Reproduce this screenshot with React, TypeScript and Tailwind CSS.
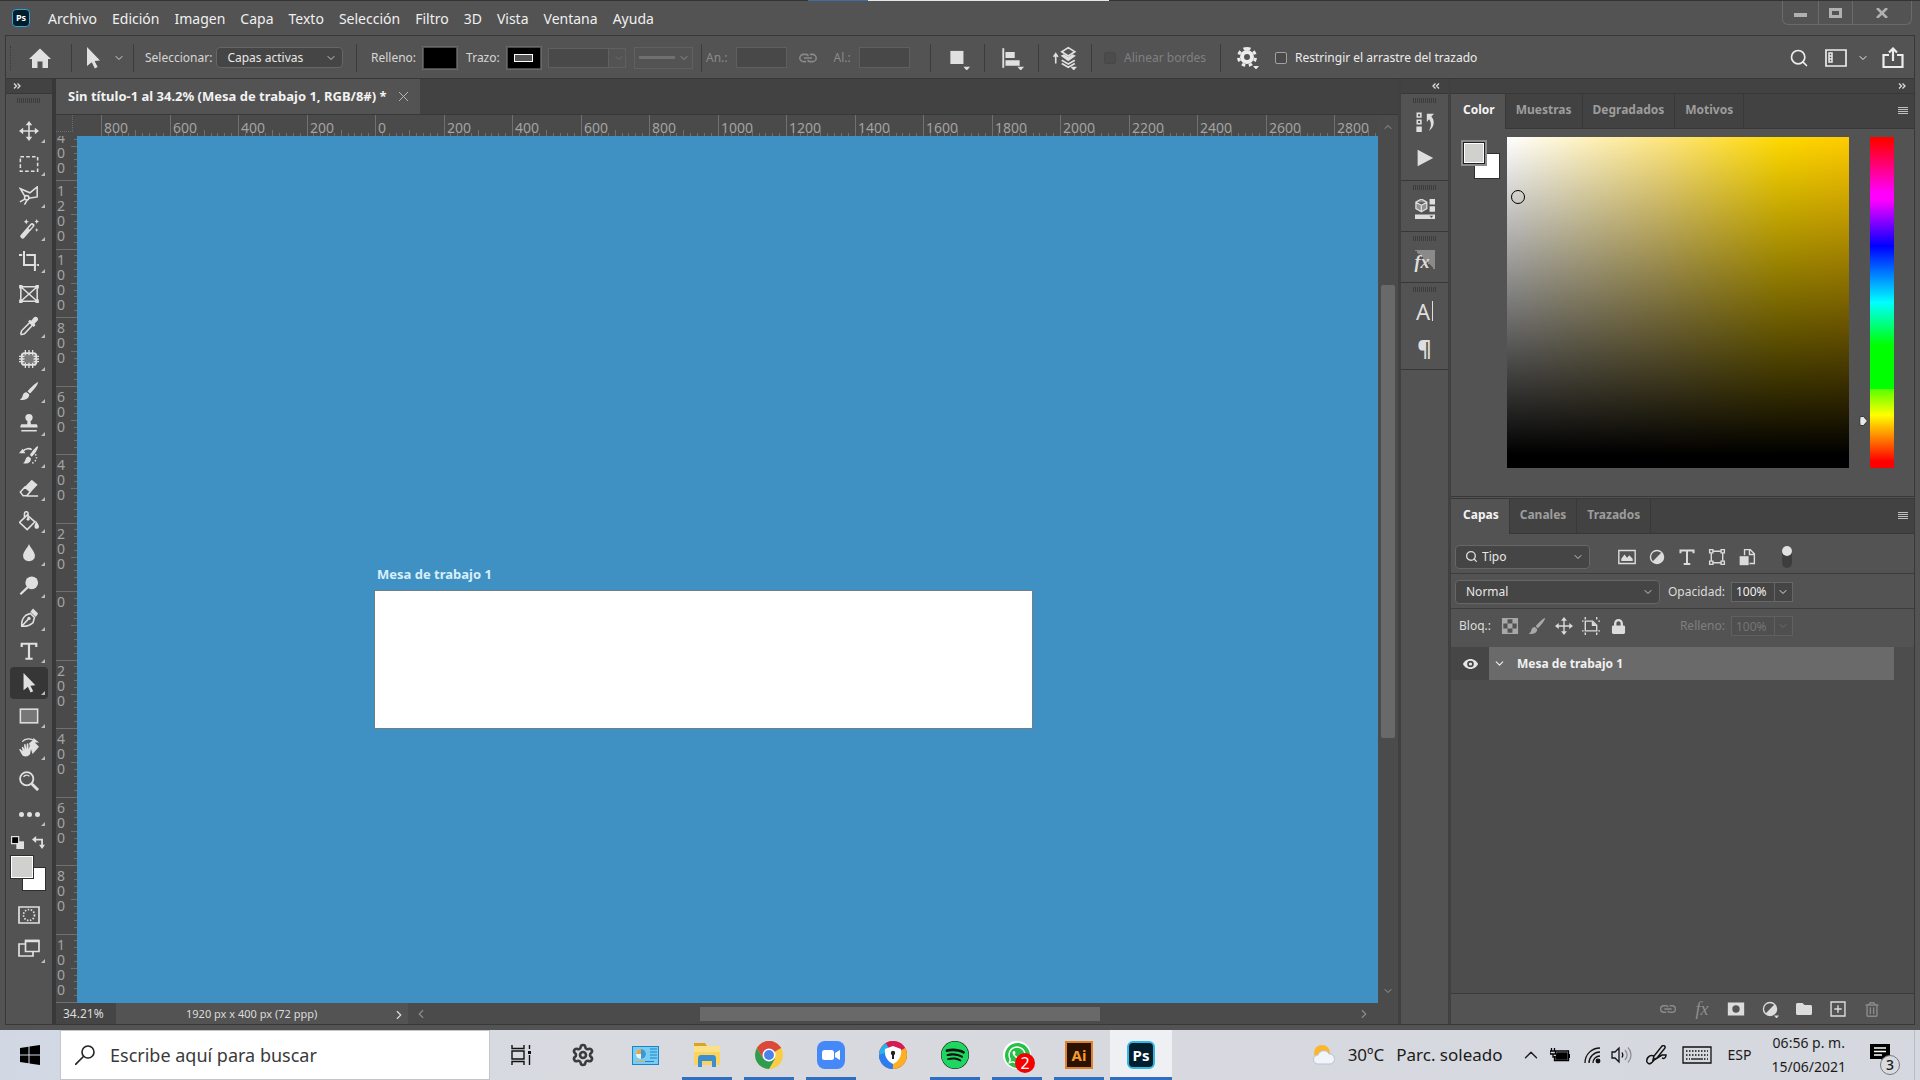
import clsx from "clsx";
import { ChevronDown, ChevronLeft, ChevronRight, ChevronUp, Search, Settings } from "lucide-react";
import React from "react";
import { FaFolder, FaLock, FaRegTrashAlt, FaSpotify, FaWhatsapp } from "react-icons/fa";

interface IconProps {
    size?: number;
    className?: string;
    children: React.ReactNode;
}

const Icon: React.FC<IconProps> = ({ size = 22, className, children }) => (
    <svg width={size} height={size} viewBox="0 0 22 22" fill="none" stroke="currentColor" strokeWidth={1.7} className={clsx("shrink-0", className)} aria-hidden="true">
        {children}
    </svg>
);

const solid = { fill: "currentColor", stroke: "none" };

/* Shared glyphs */
const MoveGlyph = () => (
    <>
        <path d="M11 4v14M4 11h14" />
        <path {...solid} d="M11 0l3.6 4.6H7.4zM11 22l3.6-4.6H7.4zM0 11l4.6-3.6v7.2zM22 11l-4.6-3.6v7.2z" />
    </>
);

const ArrowGlyph = () => <path {...solid} d="M5 0l13 13.5-5.4.4 3 6.2-2.8 1.4-3-6.3L5 19z" />;

const BrushGlyph = () => (
    <path {...solid} d="M21 1c-3 1.200-8.500 6.500-11.600 10.300l2.600 2.500C15.500 10.500 20.500 5 21 1zM8.300 12.300c-2.500 0-3.800 1.700-4.200 3.700C3.700 18 2.600 19.500 1 20.500c3.500.9 8.600.3 10-3.600.4-1.200.2-2-.1-2.500z" />
);

const LinkGlyph = () => (
    <path d="M9 15H6a4 4 0 010-8h3M13 7h3a4 4 0 010 8h-3M6.500 11h9M9 7c1.500 0 2 .8 2 2M13 15c-1.500 0-2-.8-2-2" />
);

const TextGlyph = () => <path strokeWidth={2.4} d="M3 6.500V3h16v3.500M11 3v16.500M7 19.500h8" />;

const HalfCircle = () => (
    <>
        <circle cx="11" cy="11" r="8" />
        <path {...solid} d="M16.700 5.300A8 8 0 015.300 16.700z" />
    </>
);

interface Tool {
    name: string;
    glyph: React.ReactNode;
    corner?: boolean;
    active?: boolean;
}

const tools: Tool[] = [
    { name: "Mover", corner: true, glyph: <MoveGlyph /> },
    { name: "Marco rectangular", corner: true, glyph: <path strokeDasharray="4 2.400" d="M1.500 3h19v16h-19z" /> },
    {
        name: "Lazo poligonal", corner: true,
        glyph: <><path d="M10.500 13.500l9.500-1.500V1l-8 6.500L1.500 3l5 8.500" /><circle cx="8.500" cy="13" r="2.400" /><path d="M6.500 14.500L1 17.500M9 15.500l-3 5" /></>,
    },
    {
        name: "Varita mágica", corner: true,
        glyph: <><path strokeLinecap="round" strokeWidth={5} d="M4 19L14.500 7" /><path stroke="#535353" strokeWidth={1.800} d="M11 11l3.700-4.200" /><path {...solid} d="M8 0l.9 2.100L11 3l-2.100.9L8 6l-.9-2.100L5 3l2.100-.9zM19.500 0l.8 2 1.700.8-1.700.8-.8 2-.8-2-1.700-.8 1.700-.8zM19.500 10l.6 1.500 1.400.6-1.400.6-.6 1.500-.6-1.500-1.400-.6 1.400-.6z" /></>,
    },
    { name: "Recortar", corner: true, glyph: <path strokeWidth={2.200} d="M5.500 0v15.500H19M0 4.500h3.500M8 4.500h9.500V22M20 15.500h2.500" /> },
    { name: "Marco", glyph: <path d="M2 3h18v16H2zM2 3l18 16M20 3L2 19M1 2h2v2H1zM19 2h2v2h-2zM1 18h2v2H1zM19 18h2v2h-2z" /> },
    {
        name: "Cuentagotas", corner: true,
        glyph: <><path d="M12 7l3 3-9 9.500-3.500 1L2 19l1-3z" /><path {...solid} d="M10 6l2-2 1.500 1.200L16.500 1.500c2.500-2.300 6 1.200 3.800 3.800L17 8.500l1.200 1.500-2 2z" /></>,
    },
    {
        name: "Parche", corner: true,
        glyph: <><rect x="3" y="4.500" width="16" height="13" rx="3" fill="#7a7a7a" strokeWidth={2} /><path strokeWidth={1.400} d="M7 1v6M11 1v6M15 1v6M7 15v6M11 15v6M15 15v6M0 8h6M0 11h6M0 14h6M16 8h6M16 11h6M16 14h6" /></>,
    },
    { name: "Pincel", corner: true, glyph: <BrushGlyph /> },
    {
        name: "Tampón de clonar", corner: true,
        glyph: <><circle {...solid} cx="11" cy="5" r="4" /><path {...solid} d="M9.500 7h3l.6 5.500H19c1 0 1.500 1.500 1.500 3.500h-19c0-2 .5-3.500 1.500-3.500h6z" /><path d="M2.500 19.500h17" /></>,
    },
    {
        name: "Pincel de historia", corner: true,
        glyph: <><path {...solid} d="M21 0c-3 1.200-6.500 6-9 9.800l2 2C17 9 21 4 21 0zM10.500 11.500c-3 .5-3 3-4 5-.5 1-1 1.700-2 2.500 3 .9 7.500.3 8.500-3.600.2-1 .1-1.600-.1-2zM0 8l4-5 3 5z" /><path d="M4 6c3-4 8-3.500 10-2" /><path strokeDasharray="1.500 2" d="M18 9c3 4 0 9-4 10" /></>,
    },
    { name: "Borrador", corner: true, glyph: <><path d="M1.500 15.500l5-5.500 6 5-4 4.500H4.500zM8 19.800h13" /><path {...solid} d="M6.500 9.500L14 2l6.500 5.500-7.500 8z" /></> },
    {
        name: "Bote de pintura", corner: true,
        glyph: <><path d="M9 4.500L17.500 12 9 20.500.5 12.500zM6 7V3c0-3 4-3 4 0v6" /><circle {...solid} cx="10" cy="9" r="1.600" /><path {...solid} d="M18.500 10.500c1.500 2.500 3.500 4.500 3.500 6.500 0 3.500-5 3.500-5 0 0-2 1.500-4 1.500-6.500z" /></>,
    },
    { name: "Desenfocar", corner: true, glyph: <path {...solid} d="M11 1c1.500 4.500 6.500 8 6.500 13 0 8-13 8-13 0C4.500 9 9.500 5.500 11 1z" /> },
    { name: "Sobreexponer", corner: true, glyph: <><circle {...solid} cx="14" cy="7.500" r="7" /><path strokeWidth={2.400} d="M1.500 20L10 12" /></> },
    {
        name: "Pluma", corner: true,
        glyph: <><path d="M3 20c-.5-5 1-9 4.500-12l5-2 4.500 4.500-1.500 5.500C12 19 8 20.500 3 20zM3.500 19.500l6.500-7" /><circle {...solid} cx="11" cy="11.500" r="1.800" /><path {...solid} d="M12.500 4l3-3.500L21 6l-2.500 4z" /></>,
    },
    { name: "Texto", corner: true, glyph: <TextGlyph /> },
    { name: "Selección de trazado", corner: true, active: true, glyph: <ArrowGlyph /> },
    { name: "Rectángulo", corner: true, glyph: <rect x="1.500" y="3.500" width="19" height="15" fill="#777777" /> },
    {
        name: "Rotar vista", corner: true,
        glyph: <><path {...solid} d="M11 6l4-3.500 7 7-7 8zM3 10l1.500-.5L6 13l-.5-6h1.700l1 5.500.3-6.500h1.700l.5 6.500L12.300 7l1.500.5-1.300 9c-.5 4-7.500 5.500-9.500 1.500L0 12.500l1.500-.5L4 14.500zM16 0l6 5h-7z" /><path strokeWidth={1.400} d="M3.500 4C7 0 13 0 17 3" /></>,
    },
    { name: "Zoom", glyph: <><circle cx="8.500" cy="8.500" r="7.300" strokeWidth={2} /><path strokeWidth={1.400} d="M5 6.500c1.500-2.500 5-2.500 6.500-.5" /><path strokeWidth={3.200} d="M14 14l7 7" /></> },
];

interface ChevProps {
    className?: string;
}

const Chev: React.FC<ChevProps> = ({ className }) => (
    <ChevronDown size={12} strokeWidth={2} className={clsx("shrink-0 pointer-events-none", className)} />
);

const Grip = () => (
    <div className="h-[5px] w-6 bg-[repeating-linear-gradient(90deg,#3c3c3c_0px,#3c3c3c_1px,transparent_1px,transparent_2px)]" />
);

const DoubleChevron: React.FC<{ left?: boolean; label: string }> = ({ left, label }) => (
    <button aria-label={label} className="text-[#dcdcdc]">
        <svg width="8" height="6" viewBox="0 0 8 6" fill="none" stroke="currentColor" strokeWidth={1.300} className={clsx(left && "rotate-180")}>
            <path d="M1 .5L3.500 3 1 5.500M4.500.5L7 3 4.500 5.500" />
        </svg>
    </button>
);

interface PickerProps {
    label: string;
    value: string;
    className: string;
    padding?: string;
}

const Picker: React.FC<PickerProps> = ({ label, value, className, padding = "pl-2" }) => (
    <div className={clsx("relative shrink-0", className)}>
        <select aria-label={label} className={clsx("h-full w-full appearance-none rounded-sm border border-[#666666] bg-[#454545] text-[#e8e8e8]", padding)}>
            <option>{value}</option>
        </select>
        <Chev className="absolute right-1.5 top-1/2 -translate-y-1/2 text-[#c8c8c8]" />
    </div>
);

/* Title bar */
const menus = ["Archivo", "Edición", "Imagen", "Capa", "Texto", "Selección", "Filtro", "3D", "Vista", "Ventana", "Ayuda"];

const MenuBar = () => (
    <header className="shrink-0">
        <div className="flex h-px bg-[#333333]">
            <div className="ml-[42.1%] w-[60px] bg-[#3f6ea5]" />
            <div className="w-[241px] bg-[#e6e6e6]" />
        </div>
        <div className="flex h-[34px] items-center pl-3 pr-2">
            <div className="flex size-[18px] items-center justify-center rounded border-[1.5px] border-[#2fa3d6] bg-[#001d2c] text-[9px] font-bold text-white">Ps</div>
            <nav className="ml-[18px] flex items-center gap-[15px] pt-0.5 text-sm text-[#f0f0f0]">
                {menus.map((menu) => (
                    <button key={menu}>{menu}</button>
                ))}
            </nav>
            <div className="ml-auto flex h-6 self-start rounded-b-md border border-t-0 border-[#6a6a6a] text-[#b0b0b0]">
                <button aria-label="Minimizar" className="flex w-9 items-center justify-center border-r border-[#6a6a6a]">
                    <span className="mt-1 h-1 w-[13px] bg-[#b0b0b0]" />
                </button>
                <button aria-label="Maximizar" className="flex w-[34px] items-center justify-center border-r border-[#6a6a6a]">
                    <span className="h-[10px] w-[13px] border-3 border-[#b0b0b0]" />
                </button>
                <button aria-label="Cerrar" className="flex w-[58px] items-center justify-center">
                    <svg width="12" height="10" viewBox="0 0 12 10" stroke="currentColor" strokeWidth={2.600}>
                        <path d="M1 0l10 10M11 0L1 10" />
                    </svg>
                </button>
            </div>
        </div>
    </header>
);

interface CellProps {
    className?: string;
    last?: boolean;
    children: React.ReactNode;
}

const Cell: React.FC<CellProps> = ({ className, last, children }) => (
    <div className={clsx("flex h-7 shrink-0 items-center", !last && "border-r border-[#3c3c3c]", className)}>{children}</div>
);

const CornerMark = () => <path {...solid} d="M16 19h6l-3 3.500z" />;

const OptionsBar = () => (
    <div className="mx-[5px] flex h-[43px] shrink-0 items-center border border-b-0 border-[#383838] pt-px text-xs text-[#d6d6d6]">
        <Cell className="w-[66px] pl-1">
            <div className="h-6 border-l border-dotted border-[#3a3a3a]" />
            <button aria-label="Inicio" className="ml-[18px] text-[#e0e0e0]">
                <Icon><path {...solid} d="M11 1.500L22 12h-3v9h-5.500v-6.500h-5V21H3v-9H0z" /></Icon>
            </button>
        </Cell>
        <Cell className="w-[62px] justify-between pl-2.5 pr-2">
            <Icon className="text-[#e0e0e0]"><ArrowGlyph /></Icon>
            <Chev />
        </Cell>
        <Cell className="w-[223px] gap-1 pl-[11px]">
            <span>Seleccionar:</span>
            <Picker label="Seleccionar" value="Capas activas" padding="pl-2.5" className="h-[21px] w-[127px]" />
        </Cell>
        <Cell className="w-[345px] pl-3.5">
            <span>Relleno:</span>
            <button aria-label="Relleno" className="ml-1.5 h-6 w-9 border border-[#6a6a6a] bg-black outline-1 -outline-offset-2 outline-[#4a4a4a]" />
            <span className="ml-2">Trazo:</span>
            <button aria-label="Trazo" className="ml-1.5 flex h-6 w-9 items-center justify-center border border-[#6a6a6a] bg-black outline-1 -outline-offset-2 outline-[#4a4a4a]">
                <span className="h-2 w-[19px] border border-white bg-[#555555]" />
            </button>
            <div className="ml-1.5 flex h-5 w-[78px] items-center border border-[#606060]">
                <input aria-label="Grosor del trazo" disabled className="h-full w-[60px] border-r border-[#606060] bg-[#494949]" />
                <Chev className="ml-1 text-[#6c6c6c]" />
            </div>
            <div className="ml-2 flex h-[22px] w-[59px] items-center justify-between border border-[#606060] pl-1 pr-0.5">
                <div className="h-[3px] w-9 bg-[#707070]" />
                <Chev className="text-[#909090]" />
            </div>
        </Cell>
        <Cell className="w-[229px] pl-1 text-[#8a8a8a]">
            <label htmlFor="width">An.:</label>
            <input id="width" disabled className="ml-2 h-[21px] w-[51px] border border-[#5f5f5f] bg-[#484848]" />
            <Icon size={20} className="ml-[11px]"><LinkGlyph /></Icon>
            <label htmlFor="height" className="ml-4">Al.:</label>
            <input id="height" disabled className="ml-2 h-[21px] w-[51px] border border-[#5f5f5f] bg-[#484848]" />
        </Cell>
        <Cell className="w-[54px] justify-center text-[#e0e0e0]">
            <Icon size={24}><path {...solid} d="M4 4.500h12v12H4z" /><CornerMark /></Icon>
        </Cell>
        <Cell className="w-[54px] justify-center text-[#e0e0e0]">
            <Icon size={24}><path d="M3 2v18" /><path {...solid} d="M5 5.500h8.500V11H5zM5 13h13v5H5z" /><CornerMark /></Icon>
        </Cell>
        <Cell className="w-[53px] justify-center text-[#e0e0e0]">
            <Icon size={24}><path d="M14 1.500l6 3.800-6 3.800-6-3.800zM8 13l6 3.500 6-3.500M8 16l6 3.500 6-3.500M2.500 8v8M.5 10l2-3 2 3" strokeWidth={1.500} /><path {...solid} d="M7 9l3-1.500 4 2.500 4-2.500L21 9l-7 5z" /><CornerMark /></Icon>
        </Cell>
        <Cell className="w-[129px] gap-2 pl-3 text-[#808080]">
            <input id="edges" type="checkbox" disabled className="size-3 appearance-none rounded-xs border border-[#484848] bg-[#4c4c4c]" />
            <label htmlFor="edges">Alinear bordes</label>
        </Cell>
        <Cell last className="flex-1 pl-4 text-[#ececec]">
            <Icon>
                <circle cx="10" cy="10" r="5" strokeWidth={4} />
                <path strokeWidth={3} strokeDasharray="3.500 3.570" d="M10 1.500a8.500 8.500 0 010 17 8.500 8.500 0 010-17z" />
                <CornerMark />
            </Icon>
            <input id="drag" type="checkbox" className="ml-4 size-3 appearance-none rounded-xs border border-[#a0a0a0] bg-[#4a4a4a]" />
            <label htmlFor="drag" className="ml-2 whitespace-nowrap">Restringir el arrastre del trazado</label>
            <div className="ml-auto flex items-center pr-2.5">
                <button aria-label="Buscar"><Search size={20} strokeWidth={2} /></button>
                <button aria-label="Espacio de trabajo" className="ml-4">
                    <Icon><path d="M1 3h20v16H1z" /><path strokeWidth={1.500} d="M4 6h3v3H4zM4 9h3v3H4zM4 12h3v3H4z" /></Icon>
                </button>
                <Chev className="ml-2.5" />
                <button aria-label="Compartir" className="ml-[13px]">
                    <Icon><path strokeWidth={2.200} d="M7 8H1.500v12h19V8H15M11 14V3M7 5.500l4-4 4 4" /></Icon>
                </button>
            </div>
        </Cell>
    </div>
);

const Toolbar = () => (
    <aside className="flex w-12 shrink-0 flex-col border-r-2 border-[#383838]">
        <div className="flex h-[15px] items-center border-b border-[#383838] bg-[#424242] pl-[7px]">
            <DoubleChevron label="Expandir herramientas" />
        </div>
        <div className="flex justify-center pt-1 pb-3"><Grip /></div>
        <div className="flex h-[682px] flex-col items-center text-[#e0e0e0]">
            {tools.map((tool) => (
                <button
                    key={tool.name}
                    aria-label={tool.name}
                    className={clsx("relative flex w-[38px] flex-1 items-center justify-center rounded-sm", tool.active && "bg-[#363636]")}
                >
                    <Icon size={20}>{tool.glyph}</Icon>
                    {tool.corner && <span className="absolute right-[3px] bottom-1 border-b-4 border-l-4 border-b-[#bdbdbd] border-l-transparent" />}
                </button>
            ))}
        </div>
        <button aria-label="Más herramientas" className="relative mx-auto mt-px flex h-8 w-[38px] items-center justify-center gap-[3px]">
            <span className="size-[5px] rounded-full bg-[#e0e0e0]" />
            <span className="size-[5px] rounded-full bg-[#e0e0e0]" />
            <span className="size-[5px] rounded-full bg-[#e0e0e0]" />
            <span className="absolute right-[3px] bottom-1 border-b-4 border-l-4 border-b-[#bdbdbd] border-l-transparent" />
        </button>

        {/* Foreground and background colours */}
        <div className="flex items-center justify-between pl-[5px] pr-[7px] pt-1.5 text-[#e0e0e0]">
            <Icon size={13}><path {...solid} d="M9 9h13v13H9z" /><path fill="#000000" strokeWidth={2} d="M1 1h12v12H1z" /></Icon>
            <Icon size={13}><path strokeWidth={3} d="M4 6h13v12" /><path {...solid} d="M0 6l7-6v12zM17 22l-5-7h10z" /></Icon>
        </div>
        <div className="ml-1 mt-1.5 grid h-9 w-9 grid-cols-3 grid-rows-3">
            <button aria-label="Color de fondo" className="col-span-2 col-start-2 row-span-2 row-start-2 border border-[#2e2e2e] bg-white" />
            <button aria-label="Color frontal" className="z-10 col-span-2 col-start-1 row-span-2 row-start-1 border border-[#2e2e2e] bg-[#d0d0ce] outline-1 -outline-offset-2 outline-white" />
        </div>
        <button aria-label="Máscara rápida" className="mx-auto mt-[13px] text-[#e0e0e0]">
            <Icon><path d="M1 3h20v16H1z" /><circle cx="11" cy="11" r="5.500" strokeDasharray="1.500 1.500" /></Icon>
        </button>
        <button aria-label="Modo de pantalla" className="relative mx-auto mt-[11px] text-[#e0e0e0]">
            <Icon><path d="M7 7H1v12h14v-4" /><path fill="#535353" d="M7.500 3.500h13.500v11H7.500z" /><path strokeWidth={2.500} d="M7 4h14" /></Icon>
            <span className="absolute -right-[5px] -bottom-1 border-b-4 border-l-4 border-b-[#bdbdbd] border-l-transparent" />
        </button>
    </aside>
);

/* Rulers: 200 document units span this many screen pixels */
const STEP = 68.5;
const ORIGIN_X = 298;
const ORIGIN_Y = 455;

const ticks = (origin: number, from: number, to: number) => {
    const list: { at: number; kind: number }[] = [];
    for (let i = from * 10; i <= to * 10; i++) {
        list.push({ at: Math.round(origin + (i * STEP) / 10) + 0.5, kind: i % 10 === 0 ? 2 : i % 5 === 0 ? 1 : 0 });
    }
    return list;
};

const tickLength = [3, 6, 21];
const numbers = (from: number, to: number) => Array.from({ length: to - from + 1 }, (_, i) => from + i);

const RulerX = () => (
    <svg className="h-[21px] min-w-0 flex-1 bg-[#4a4a4a]" fontSize={14} fill="#a3a3a3" stroke="#707070">
        {ticks(ORIGIN_X, -4, 20).map(({ at, kind }) => (
            <line key={at} x1={at} x2={at} y1={21 - tickLength[kind]} y2={21} />
        ))}
        {numbers(-4, 14).map((n) => (
            <text key={n} x={Math.round(ORIGIN_X + n * STEP) + 3} y={18} stroke="none">{Math.abs(n * 200)}</text>
        ))}
    </svg>
);

const RulerY = () => (
    <div className="relative w-[21px] shrink-0 overflow-hidden bg-[#4a4a4a]">
        <svg className="h-full w-full" stroke="#707070">
            {ticks(ORIGIN_Y, -7, 8).map(({ at, kind }) => (
                <line key={at} y1={at} y2={at} x1={21 - tickLength[kind]} x2={21} />
            ))}
        </svg>
        {/* Numbers run downwards, one digit per line */}
        {numbers(-7, 7).map((n) => (
            <span
                key={n}
                className="absolute left-px w-2 text-sm leading-[15px] break-all text-[#a3a3a3]"
                style={{ top: Math.round(ORIGIN_Y + n * STEP) + 3 }}
            >
                {Math.abs(n * 200)}
            </span>
        ))}
    </div>
);

const Workspace = () => (
    <main className="flex min-w-0 flex-1 flex-col border-l-2 border-[#383838]">
        {/* Document tab */}
        <div className="flex h-9 shrink-0 border-b border-[#383838] bg-[#424242]">
            <div className="flex items-center gap-3 bg-[#535353] pl-3 pr-3 text-[13px] font-bold text-[#f2f2f2]">
                <span>Sin título-1 al 34.2% (Mesa de trabajo 1, RGB/8#) *</span>
                <button aria-label="Cerrar documento">
                    <svg width="9" height="9" viewBox="0 0 9 9" stroke="#b5b5b5"><path d="M0 0l9 9M9 0L0 9" /></svg>
                </button>
            </div>
        </div>

        <div className="flex min-h-0 flex-1">
            <div className="flex min-w-0 flex-1 flex-col">
                <div className="flex shrink-0">
                    <div className="w-[21px] bg-[#4a4a4a] pr-1 pb-1">
                        <div className="h-full border-r border-b border-dotted border-[#6a6a6a]" />
                    </div>
                    <RulerX />
                </div>
                <div className="flex min-h-0 flex-1">
                    <RulerY />
                    <div className="relative min-w-0 flex-1 overflow-hidden bg-[#3f91c3]">
                        <div className="absolute left-[297px] top-[428px]">
                            <p className="h-[26px] pl-[3px] text-[13px] leading-5 font-bold text-[#d9eef9]">Mesa de trabajo 1</p>
                            <div className="h-[139px] w-[659px] border border-[#6d7f8a] bg-white" />
                        </div>
                    </div>
                </div>
            </div>
            <div className="flex w-5 shrink-0 flex-col items-center bg-[#4b4b4b] py-1.5 text-[#9a9a9a]">
                <ChevronUp size={12} />
                <div className="mt-[152px] h-[453px] w-3.5 rounded-xs bg-[#696969]" />
                <ChevronDown size={12} className="mt-auto" />
            </div>
        </div>

        {/* Status bar */}
        <div className="flex h-[21px] shrink-0 items-center bg-[#4b4b4b] text-xs text-[#dcdcdc]">
            <input aria-label="Zoom" defaultValue="34.21%" className="h-full w-[60px] bg-[#454545] pl-[7px]" />
            <div className="flex h-full w-[292px] items-center justify-between bg-[#535353] pl-[70px] pr-0.5 pt-0.5 text-[11px]">
                <span>1920 px x 400 px (72 ppp)</span>
                <ChevronRight size={14} />
            </div>
            <ChevronLeft size={14} className="ml-1.5 text-[#8c8c8c]" />
            <div className="ml-[20.3%] mr-auto h-3.5 w-[400px] bg-[#696969]" />
            <ChevronRight size={14} className="mr-[27px] text-[#8c8c8c]" />
        </div>
    </main>
);

const IconGroup: React.FC<{ children: React.ReactNode }> = ({ children }) => (
    <div className="flex flex-col items-center border-b border-[#383838] pt-1 text-[#dedede]">
        <Grip />
        <div className="mt-px mb-1 flex flex-col">{children}</div>
    </div>
);

const PanelButton: React.FC<{ label: string; children: React.ReactNode }> = ({ label, children }) => (
    <button aria-label={label} className="flex h-9 w-[46px] items-center justify-center">{children}</button>
);

const IconStrip = () => (
    <aside className="flex w-[53px] shrink-0 flex-col border-x-3 border-[#404040]">
        <div className="flex h-[15px] items-center justify-end border-b border-[#383838] bg-[#424242] pr-2">
            <DoubleChevron left label="Expandir paneles" />
        </div>
        <IconGroup>
            <PanelButton label="Historia">
                <Icon size={20}><path d="M2.500 1.500h4v4h-4zM2.500 9h4v4h-4z" /><path {...solid} d="M1.500 16H7.500v6h-6zM13 2h8l-3 3c4.500 5 3 12-3 16 3-4.500 3.500-9 .5-13L13 11z" /></Icon>
            </PanelButton>
            <PanelButton label="Acciones"><Icon size={18}><path {...solid} d="M2 1l19 10L2 21z" /></Icon></PanelButton>
        </IconGroup>
        <IconGroup>
            <PanelButton label="Bibliotecas">
                <Icon size={20}><path fill="#909090" strokeWidth={1.400} d="M7 0l6 3.500v7L7 14l-6-3.500v-7zM1 3.500L7 7l6-3.500M7 7v7" /><path {...solid} d="M16 0h6v6h-6zM16 8h6v6h-6zM0 17h22v5H0z" /><path fill="#535353" stroke="none" d="M16 18.500h4L18 21z" /></Icon>
            </PanelButton>
        </IconGroup>
        <IconGroup>
            <PanelButton label="Estilos">
                <span className="flex h-5 w-5 items-end justify-start bg-[linear-gradient(45deg,#535353_50%,#8a8a8a_50%)] font-['Liberation_Serif',serif] text-lg leading-4 font-bold italic">fx</span>
            </PanelButton>
        </IconGroup>
        <IconGroup>
            <PanelButton label="Carácter">
                <span className="flex h-5 items-center border-r border-current pr-0.5 text-[22px]">A</span>
            </PanelButton>
            <PanelButton label="Párrafo"><span className="text-[22px] font-bold">¶</span></PanelButton>
        </IconGroup>
    </aside>
);

interface TabsProps {
    items: string[];
}

const PanelTabs: React.FC<TabsProps> = ({ items }) => (
    <div className="flex h-[35px] shrink-0 bg-[#424242] text-xs font-bold">
        {items.map((item, i) => (
            <button key={item} className={clsx("border-r border-[#383838] pr-2.5", i === 0 ? "bg-[#535353] pb-1 pl-3 text-[#f4f4f4]" : "border-b pb-[3px] pl-2.5 text-[#9d9d9d]")}>
                {item}
            </button>
        ))}
        <div className="flex flex-1 items-center justify-end border-b border-[#383838] pr-1.5">
            <button aria-label="Menú del panel">
                <svg width="10" height="8" viewBox="0 0 10 8" stroke="#c0c0c0" strokeWidth={1}><path d="M0 .5h10M0 2.500h10M0 4.500h10M0 6.500h10" /></svg>
            </button>
        </div>
    </div>
);

const ColorPanel = () => (
    <section className="flex h-[403px] shrink-0 flex-col border-b border-[#383838]">
        <PanelTabs items={["Color", "Muestras", "Degradados", "Motivos"]} />
        <div className="flex pl-2.5 pr-5 pt-2">
            <div className="mt-[3px] grid h-[39px] w-[39px] grid-cols-3 grid-rows-3">
                <button aria-label="Color de fondo" className="col-span-2 col-start-2 row-span-2 row-start-2 border border-[#2e2e2e] bg-white" />
                <div className="z-10 col-span-2 col-start-1 row-span-2 row-start-1 bg-[#8c8c8c] p-0.5">
                    <button aria-label="Color frontal" className="block h-full w-full border border-[#202020] bg-[#d0d0ce] outline-1 -outline-offset-2 outline-white" />
                </div>
            </div>
            <div className="relative ml-[7px] h-[331px] flex-1 bg-[linear-gradient(180deg,transparent_0%,#000_96%),linear-gradient(90deg,#fff_0%,#ffe680_45%,#ffd900_80%,#ffcc00_100%)]">
                <span className="absolute left-1 top-[53px] size-3.5 rounded-full border border-black" />
            </div>
            <div className="relative ml-[21px] h-[331px] w-6 bg-[linear-gradient(180deg,#f00_1%,#f0f_17%,#f0f_19%,#00f_33%,#0ff_50%,#0f0_63%,#0f0_76%,#5f0_76%,#ff0_84%,#f00_98%)]">
                <svg width="9" height="10" viewBox="0 0 9 10" fill="#e8e8e8" stroke="#333333" className="absolute -left-[11px] top-[279px]">
                    <path d="M1.500.5h3L8.500 5l-4 4.500h-3c-1 0-1-9 0-9z" />
                </svg>
            </div>
        </div>
    </section>
);

const LayersPanel = () => (
    <section className="mt-px flex min-h-0 flex-1 flex-col border-t border-[#383838] text-xs text-[#dcdcdc]">
        <PanelTabs items={["Capas", "Canales", "Trazados"]} />

        {/* Filter */}
        <div className="flex h-10 shrink-0 items-center border-b border-[#3c3c3c] pt-1.5 pl-1">
            <div className="relative">
                <Picker label="Filtro de capas" value="Tipo" padding="pl-[26px]" className="h-6 w-[135px]" />
                <Search size={13} strokeWidth={2.500} className="absolute top-[5px] left-2.5" />
            </div>
            <div className="ml-7 flex gap-3">
                <Icon size={18}><path d="M1 3h20v16H1z" /><path {...solid} d="M4 16V13l4-5 3 4 3-3 4 4.500V16z" /></Icon>
                <Icon size={18}><HalfCircle /></Icon>
                <Icon size={18}><TextGlyph /></Icon>
                <Icon size={18}><path d="M4 4h14v14H4z" /><path fill="#535353" d="M2 2h4v4H2zM16 2h4v4h-4zM2 16h4v4H2zM16 16h4v4h-4z" /></Icon>
                <Icon size={18}><path d="M8 9V2h7l5 5v12h-6M14 2v6h6" /><path {...solid} d="M2 10h11v11H2z" /></Icon>
            </div>
            <button aria-label="Activar filtro" className="ml-[26px] flex h-[22px] w-2.5 items-start rounded-full bg-[#3d3d3d]">
                <span className="size-2.5 rounded-full bg-[#e0e0e0]" />
            </button>
        </div>

        {/* Blend mode and opacity */}
        <div className="flex h-[35px] shrink-0 items-center border-b border-[#3c3c3c] pt-px pl-1">
            <Picker label="Modo de fusión" value="Normal" padding="pl-2.5" className="h-6 w-[205px]" />
            <label htmlFor="opacity" className="w-[65px] text-right">Opacidad:</label>
            <div className="ml-1.5 flex h-5 w-[62px] items-center border border-[#666666] bg-[#454545]">
                <input id="opacity" defaultValue="100%" className="h-full w-[43px] border-r border-[#666666] pl-1 text-[#f0f0f0]" />
                <Chev className="ml-0.5" />
            </div>
        </div>

        {/* Locks */}
        <div className="flex h-[38px] shrink-0 items-center pb-1 pl-2">
            <span className="w-9">Bloq.:</span>
            <div className="ml-1.5 flex items-center gap-[9px]">
                <Icon size={18} className="text-[#a8a8a8]"><path d="M2 2h18v18H2z" /><path {...solid} d="M2 2h6v6H2zM14 2h6v6h-6zM8 8h6v6H8zM2 14h6v6H2zM14 14h6v6h-6z" /></Icon>
                <Icon size={18} className="text-[#a8a8a8]"><BrushGlyph /></Icon>
                <Icon size={18}><MoveGlyph /></Icon>
                <Icon size={18}><path d="M4 5h9l5 5v7H4zM4 0v3M0 5h2M0 17h2M4 19v3M18 19v3M20 17h2M18 0v3M20 5h2" /><path {...solid} d="M12 5l6 6h-6z" /></Icon>
                <FaLock size={15} className="ml-0.5" />
            </div>
            <label htmlFor="fill" className="ml-auto text-[#7f7f7f]">Relleno:</label>
            <div className="ml-1.5 mr-[121px] flex h-5 w-[62px] items-center border border-[#606060] bg-[#4f4f4f]">
                <input id="fill" disabled defaultValue="100%" className="h-full w-[43px] border-r border-[#606060] pl-1 text-[#757575]" />
                <Chev className="ml-0.5 text-[#6c6c6c]" />
            </div>
        </div>

        {/* Layer list */}
        <div className="min-h-0 flex-1 bg-[#4d4d4d] pr-5">
            <div className="flex h-[33px] text-[#f0f0f0]">
                <button aria-label="Visibilidad de la capa" className="flex w-[38px] items-center justify-center bg-[#464646]">
                    <svg width="15" height="10" viewBox="0 0 15 10" fill="#e6e6e6"><path d="M7.500 0C11 0 14 2.500 15 5c-1 2.500-4 5-7.500 5S1 7.500 0 5c1-2.500 4-5 7.500-5z" /><circle cx="7.500" cy="5" r="3.300" fill="#464646" /><circle cx="7.500" cy="5" r="1.600" /></svg>
                </button>
                <div className="flex flex-1 items-center gap-[11px] bg-[#6a6a6a] pl-1 font-bold">
                    <ChevronDown size={13} />
                    <span>Mesa de trabajo 1</span>
                </div>
            </div>
        </div>

        <div className="flex h-[31px] shrink-0 items-center justify-end gap-4 border-t border-[#3a3a3a] pr-[33px]">
            <button aria-label="Enlazar capas" className="text-[#8a8a8a]"><Icon size={18}><LinkGlyph /></Icon></button>
            <button aria-label="Estilo de capa" className="w-[18px] font-['Liberation_Serif',serif] text-lg leading-4 text-[#8f8f8f] italic">fx</button>
            <button aria-label="Máscara de capa"><Icon size={18}><path {...solid} fillRule="evenodd" d="M1 3h20v16H1zM11 6.500a4.500 4.500 0 100 9 4.500 4.500 0 000-9z" /></Icon></button>
            <button aria-label="Capa de ajuste"><Icon size={18}><HalfCircle /><CornerMark /></Icon></button>
            <button aria-label="Grupo nuevo"><FaFolder size={16} className="w-[18px]" /></button>
            <button aria-label="Capa nueva"><Icon size={18}><path d="M2.500 2.500h17v17h-17zM11 6.500v9M6.500 11h9" /></Icon></button>
            <button aria-label="Eliminar capa" className="text-[#8a8a8a]"><FaRegTrashAlt size={15} className="w-[18px]" /></button>
        </div>
    </section>
);

/* Windows taskbar */
interface TaskProps {
    label: string;
    running?: boolean;
    active?: boolean;
    children: React.ReactNode;
}

const Task: React.FC<TaskProps> = ({ label, running, active, children }) => (
    <button aria-label={label} className={clsx("relative flex w-[62px] items-center justify-center", active && "bg-[#eff0f3]")}>
        {children}
        {running && <span className={clsx("absolute bottom-0 h-[3px] bg-[#2e6fc0]", active ? "inset-x-0" : "inset-x-1.5")} />}
    </button>
);

const Taskbar = () => (
    <footer className="flex h-[50px] shrink-0 bg-[linear-gradient(90deg,#d1d8e4,#d8dae0_30%,#d5d8de)] text-[#1b1b1b]">
        <button aria-label="Inicio" className="flex w-[60px] items-center justify-center">
            <svg width="20" height="20" viewBox="0 0 20 20"><path d="M0 3l8.500-1.200v7.700H0zM9.500 1.600L20 0v9.500H9.500zM0 10.500h8.500v7.700L0 17zM9.500 10.500H20V20L9.500 18.400z" /></svg>
        </button>
        <label className="flex w-[430px] items-center gap-[15px] border border-[#c3c5ca] bg-white pl-3.5">
            <svg width="20" height="20" viewBox="0 0 20 20" fill="none" stroke="#222222" strokeWidth={1.600}><circle cx="13" cy="7" r="6" /><path d="M8.700 11.300L0 20" /></svg>
            <input aria-label="Buscar" placeholder="Escribe aquí para buscar" className="min-w-0 flex-1 text-lg placeholder:text-[#3a3a3a]" />
        </label>
        <Task label="Vista de tareas">
            <svg width="20" height="20" viewBox="0 0 20 20" fill="none" stroke="#111111" strokeWidth={1.400}><path d="M1 0v3.500h12V0M1 20v-3.500h12V20M1 6h12v8H1zM18.500 0v4M18.500 10v10" /><path d="M17 6h3v3h-3z" fill="#111111" stroke="none" /></svg>
        </Task>
        <Task label="Configuración"><Settings size={24} strokeWidth={2.600} className="text-[#3c3c3c]" /></Task>
        <Task label="Panel">
            <svg width="27" height="19" viewBox="0 0 27 19"><path d="M0 0h27v19H0z" fill="#1b84c6" /><path d="M1 1h25v17H1z" fill="#79ccf3" /><circle cx="9" cy="8" r="5" fill="#e6f5fd" /><path d="M9 8V3a5 5 0 010 10z" fill="#3d97d3" /><path d="M9 8H4a5 5 0 015-5z" fill="#eaa63a" /><path d="M18 3h7M18 6h7M18 9h7M18 12h7" stroke="#1b84c6" strokeWidth={1.200} /><path d="M4 15.500h8" stroke="#eaa63a" /><path d="M13 15.500h9" stroke="#1b84c6" /></svg>
        </Task>
        <Task label="Explorador" running>
            <svg width="28" height="24" viewBox="0 0 28 24"><path d="M1 0h11l2 3h-13z" fill="#d9a521" /><path d="M1 3h26v19H1z" fill="#fbd35d" /><path d="M1 3h26v6H1z" fill="#fbe08a" /><path d="M5 24v-8c0-3 1-4 3-4h12c2 0 3 1 3 4v8h-4v-6H9v6z" fill="#3b8fd0" /></svg>
        </Task>
        <Task label="Chrome" running>
            <svg width="28" height="28" viewBox="0 0 28 28"><circle cx="14" cy="14" r="14" fill="#f9ce44" /><path d="M14 14L1.900 7A14 14 0 0126.100 7z" fill="#d9493c" /><path d="M14 7h12.100A14 14 0 001.900 7L8 17.500z" fill="#d9493c" /><path d="M1.900 7A14 14 0 0014 28l6.100-10.500L8 17.500z" fill="#2f9c54" /><circle cx="14" cy="14" r="6.500" fill="#fff" /><circle cx="14" cy="14" r="5" fill="#4a83ee" /></svg>
        </Task>
        <Task label="Zoom" running>
            <svg width="28" height="28" viewBox="0 0 28 28"><rect width="28" height="28" rx="8" fill="#4489f7" /><rect x="5" y="9" width="12" height="10" rx="2.500" fill="#fff" /><path d="M18 12l5-3v10l-5-3z" fill="#fff" /></svg>
        </Task>
        <Task label="VPN">
            <svg width="28" height="28" viewBox="0 0 28 28"><circle cx="14" cy="14" r="14" fill="#e3322d" /><path d="M14 14V28A14 14 0 017 1.900z" fill="#25b2ee" /><path d="M14 14L7 1.900A14 14 0 0126.100 7z" fill="#d51b55" /><path d="M14 14L26.100 7A14 14 0 0114 28z" fill="#fdb022" /><path d="M14 28A14 14 0 010 14l14-5z" fill="#2d7cf0" /><path d="M14 5l8 3c1 7-2 12-8 15-6-3-9-8-8-15z" fill="#fff" /><circle cx="14" cy="12" r="2.200" fill="#222" /><path d="M13 13h2v5h-2z" fill="#222" /></svg>
        </Task>
        <Task label="Spotify" running><FaSpotify size={28} className="rounded-full bg-[#111111] text-[#1ed760]" /></Task>
        <Task label="WhatsApp" running>
            <span className="relative flex size-7 items-center justify-center rounded-full bg-white">
                <span className="flex size-[25px] items-center justify-center rounded-full bg-[#25c145]"><FaWhatsapp size={20} className="text-white" /></span>
                <span className="absolute -right-1 -bottom-1 flex size-5 items-center justify-center rounded-full bg-[#f40000] text-base text-white">2</span>
            </span>
        </Task>
        <Task label="Illustrator" running>
            <span className="flex size-7 items-center justify-center border-2 border-[#e0812a] bg-[#2a1100] text-[15px] font-bold text-[#f49a2c]">Ai</span>
        </Task>
        <Task label="Photoshop" running active>
            <span className="flex size-7 items-center justify-center rounded-md border-2 border-[#31b6e8] bg-[#001e2b] text-[15px] font-bold text-white">Ps</span>
        </Task>

        {/* System tray */}
        <div className="ml-auto mr-[5px] flex items-center border-r border-[#b9bdc6] pr-5">
            <svg width="28" height="24" viewBox="0 0 28 24"><circle cx="12" cy="10" r="8" fill="#fbb62c" /><path d="M8 21a4.500 4.500 0 010-9c1.500-5 9-6 11-1 6-1 8 9 1 10z" fill="#f1f4f9" stroke="#b7c3d8" /></svg>
            <span className="ml-2.5 text-[17px]">30ºC</span>
            <span className="ml-3 text-[17px]">Parc. soleado</span>
            <ChevronUp size={22} strokeWidth={1.500} className="ml-[17px]" />
            <svg width="20" height="14" viewBox="0 0 20 14" fill="none" stroke="#000" strokeWidth={1.300} className="ml-2"><path d="M6 3h12.500v9.500H4.500V8" /><path d="M7 5h10v6H6z" fill="#000" /><path d="M19.500 6v4M1.500 0v2.500M4.500 0v2.500M0 3h5.500v3H0zM3 6v3h3" /></svg>
            <svg width="17" height="18" viewBox="0 0 17 18" fill="none" stroke="#111" strokeWidth={1.300} className="ml-3.5"><path d="M1 17C1 8 8 2 16 2M5 17C5 11 10 6 16 6M9 17c0-4 3-7 7-7" /><circle cx="14" cy="15" r="1.800" fill="#111" /></svg>
            <svg width="21" height="18" viewBox="0 0 21 18" fill="none" stroke="#111" strokeWidth={1.300} className="ml-2.5"><path d="M1 6h3l4-4v14l-4-4H1zM11 6.500c1 1.500 1 3.500 0 5" /><path stroke="#8c8f96" d="M14 4c2.500 3 2.500 7 0 10M17 1.500c4 4.500 4 10.500 0 15" /></svg>
            <svg width="21" height="20" viewBox="0 0 21 20" fill="none" stroke="#111" strokeWidth={1.500} className="ml-3.5"><path d="M7 15l1-4 8-10c2-1 3.500 0 3 2l-8 10zM8 11c-5-2-8 3-7 6 2 4 6 0 7-2l8-5h4c0 3-2 4-4 3" /></svg>
            <svg width="30" height="18" viewBox="0 0 30 18" fill="none" stroke="#111" strokeWidth={1.300} className="ml-[15px]"><path d="M1 1h28v16H1z" /><path strokeDasharray="1.500 1.500" d="M4 5h22M4 9h22M4 13h4M22 13h4" /><path d="M9 13h12" /></svg>
            <span className="ml-4 text-sm">ESP</span>
            <div className="ml-5 text-center text-sm leading-6">
                <p>06:56 p. m.</p>
                <p>15/06/2021</p>
            </div>
            <button aria-label="Notificaciones" className="relative ml-6 flex size-6 items-start">
                <svg width="21" height="21" viewBox="0 0 21 21"><path d="M0 1h20v15h-4v4l-5-4H0z" /><path d="M4 5h12M4 8.500h12M4 12h8" stroke="#fff" strokeWidth={1.300} /></svg>
                <span className="absolute -right-1.5 -bottom-2 flex size-5 items-center justify-center rounded-full border border-[#777] bg-[#d9dbe0] text-sm font-medium">3</span>
            </button>
        </div>
    </footer>
);

const App = () => (
    <div className="flex h-screen flex-col overflow-hidden bg-[#535353] font-['Noto_Sans','Open_Sans',sans-serif]">
        <MenuBar />
        <OptionsBar />
        <div className="mx-[5px] mb-[5px] flex min-h-0 flex-1 border border-[#383838]">
            <Toolbar />
            <Workspace />
            <IconStrip />
            <aside className="flex w-[463px] shrink-0 flex-col">
                <div className="flex h-[15px] shrink-0 items-center justify-end border-b border-[#383838] bg-[#424242] pr-2">
                    <DoubleChevron label="Contraer paneles" />
                </div>
                <ColorPanel />
                <LayersPanel />
            </aside>
        </div>
        <Taskbar />
    </div>
);

export default App;
